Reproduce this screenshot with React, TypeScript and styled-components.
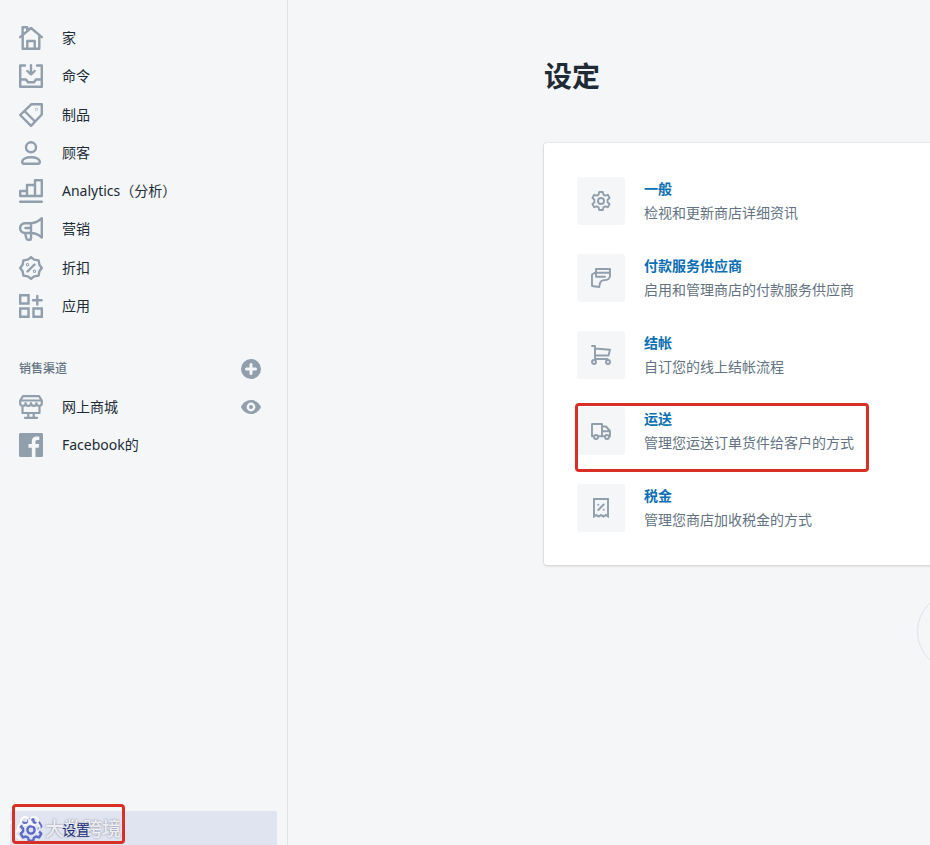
import React from "react";
import styled, { createGlobalStyle, css } from "styled-components";

const GlobalStyle = createGlobalStyle`
  *, *::before, *::after { box-sizing: border-box; }
  body {
    margin: 0;
    background: #f4f6f8;
    color: #212b36;
    font-family: "Noto Sans", "Noto Sans CJK SC", sans-serif;
    font-size: 14px;
    line-height: 24px;
    overflow: hidden;
  }
  ul { list-style: none; margin: 0; padding: 0; }
  svg { display: block; flex: none; }
`;

const Shell = styled.div`
  display: flex;
  height: 100vh;
  overflow: hidden;
`;

const Sidebar = styled.nav`
  display: flex;
  flex-direction: column;
  flex: none;
  width: 288px;
  padding: 19px 10px 0;
  border-right: 1px solid #dfe3e8;
`;

const NavList = styled.ul<{ $primary?: boolean }>`
  display: grid;
  grid-auto-rows: 1fr;
  ${(p) => p.$primary && css`min-height: 306px;`}
`;

const NavItem = styled.li`
  display: flex;
  align-items: center;
  min-height: 38px;
  padding-right: 16px;
`;

const NavLink = styled.a<{ $active?: boolean }>`
  display: flex;
  align-items: center;
  gap: 19px;
  flex: 1;
  height: 38px;
  padding-left: 9px;
  border-radius: 3px;
  color: ${(p) => (p.$active ? "#202e78" : "#212b36")};
  background: ${(p) => (p.$active ? "#e0e3f0" : "transparent")};
  font-weight: 400;
  font-size: 14px;
  text-decoration: none;
`;

const ActiveLabel = styled.span`
  position: relative;
  z-index: 1;
`;

const SectionHeader = styled.div`
  display: flex;
  align-items: center;
  justify-content: space-between;
  height: 38px;
  margin-top: 25px;
  padding: 0 16px 0 9px;
`;

const SectionTitle = styled.h2`
  margin: 0;
  color: #637381;
  font-size: 12px;
  font-weight: 500;
`;

const IconButton = styled.button`
  padding: 0;
  border: 0;
  background: none;
  cursor: pointer;
`;

const SettingsDock = styled.div`
  position: relative;
  display: flex;
  margin: auto 0 -4px;
`;

const Highlight = styled.span`
  position: absolute;
  z-index: 2;
  border: 3px solid #d93025;
  border-radius: 4px;
  pointer-events: none;
`;

const DockHighlight = styled(Highlight)`
  left: 2px;
  top: -7px;
  width: 113px;
  height: 40px;
`;

const Watermark = styled.span`
  position: absolute;
  left: -2px;
  top: 1px;
  display: flex;
  align-items: center;
  gap: 3px;
  color: rgba(255, 255, 255, 0.85);
  font-size: 19px;
  font-weight: 500;
  line-height: 32px;
  text-shadow: 0 0 2px #777c90;
  white-space: nowrap;
  pointer-events: none;
`;

const Main = styled.main`
  flex: 1;
  min-width: 0;
  overflow: hidden;
  padding: 56px 0 0 256px;
`;

const Page = styled.div`
  min-width: 998px;
`;

const Title = styled.h1`
  margin: 0 0 47px;
  font-size: 28px;
  line-height: 40px;
  font-weight: 700;
`;

const Card = styled.section`
  padding: 34px 33px 33px;
  border-radius: 3px;
  background: #fff;
  box-shadow: 0 0 0 1px rgba(63, 63, 68, 0.06), 0 1px 3px rgba(63, 63, 68, 0.17);
`;

const SettingList = styled.ul`
  display: flex;
  flex-direction: column;
  justify-content: space-between;
  min-height: 355px;
`;

const SettingItem = styled.li`
  position: relative;
  display: flex;
  gap: 19px;
`;

const IconTile = styled.span`
  display: grid;
  place-items: center;
  width: 48px;
  height: 48px;
  border-radius: 3px;
  background: #f4f6f8;
`;

const SettingTitle = styled.a`
  display: block;
  color: #0b6fb3;
  font-weight: 700;
  text-decoration: none;
`;

const SettingText = styled.p`
  margin: 0;
  color: #637381;
`;

const ItemHighlight = styled(Highlight)`
  left: -2px;
  top: -4px;
  width: 294px;
  height: 69px;
`;

const Footer = styled.footer`
  display: flex;
  justify-content: center;
  margin-top: 27px;
`;

const HelpPill = styled.div`
  width: 252px;
  height: 79px;
  border: 1px solid #dfe3e8;
  border-radius: 40px;
`;

type IconProps = {
  size?: number;
  color?: string;
  box?: number;
  weight?: number;
  children: React.ReactNode;
};

const Icon = ({ size = 24, color = "#919eab", box = 24, weight = 2.4, children }: IconProps) => (
  <svg width={size} height={size} viewBox={`0 0 ${box} ${box}`} fill="none" stroke={color}
    strokeWidth={weight} strokeLinejoin="round" strokeLinecap="round" aria-hidden="true">
    {children}
  </svg>
);

const GearShape = () => (
  <>
    <path d="M8.2 1h3.6l.6 2.600 1.800 1 2.600-.8 1.800 3.100-2 1.900v2.400l2 1.900-1.800 3.100-2.600-.8-1.800 1-.6 2.600H8.200l-.6-2.600-1.800-1-2.600.8-1.800-3.100 2-1.900V8.800l-2-1.900 1.800-3.100 2.600.8 1.800-1z" />
    <circle cx="10" cy="10" r="3" />
  </>
);

const primary = [
  { label: "家", icon: <path d="M1.200 11.200 12 2l10.800 9.200M3.700 9.500v13.300h16.600V9.500M8.300 22.800V15h7.400v7.800M3.600 8.500V1.200h4.600v3" /> },
  { label: "命令", icon: <path d="M6 1.500H1.200v21.300h21.600V1.500H18M12 1.200V10M8.300 7l3.700 3.500L15.700 7M1.200 15.500H7l2 2.800h6l2-2.800h5.800" /> },
  { label: "制品", icon: <><path d="M12.500 1.200h10.300v10.300L12 22.800 1.200 12zM5.500 8 16 18.500" /><circle cx="17.500" cy="6.500" r=".2" /></> },
  { label: "顾客", icon: <><circle cx="12" cy="6.300" r="5" /><path d="M5 22.800h14c1 0 1.800-.8 1.800-1.700 0-3-3.800-4.900-8.800-4.900s-8.800 1.900-8.800 4.900c0 .9.800 1.700 1.800 1.700z" /></> },
  { label: "Analytics（分析）", icon: <path d="M1.200 17v-5H8v5zM8 17V6h8v11zM16 17V1.200h6.800V17zM1.200 22.700h21.600" /> },
  { label: "营销", icon: <path d="M22.800 1.200V20.500c-3-2.800-6.300-4.500-10.800-4.500H6A4.900 4.900 0 0 1 6 6.200h6c4.500 0 7.800-2 10.800-5zM12 6.200V21.500c0 .8-.5 1.300-1.200 1.300H9.500c-1 0-1.800-.6-2.100-1.500L6 16M6.500 11H12" /> },
  {
    label: "折扣",
    icon: (
      <>
        <path d="M12 1.200l3.200 2.400 4.400.8.800 4.400L22.800 12l-2.400 3.200-.8 4.400-4.400.8L12 22.800l-3.200-2.400-4.400-.8-.8-4.400L1.200 12l2.400-3.200.8-4.400 4.400-.8zM8.500 15.500l7-7" />
        <circle cx="8.500" cy="8.800" r=".5" />
        <circle cx="15.500" cy="15.200" r=".5" />
      </>
    ),
  },
  { label: "应用", icon: <g strokeLinejoin="miter"><path d="M1.200 1.200h8.300v8.300H1.200zM1.200 14.500h8.300v8.300H1.200zM14.500 14.500h8.300v8.300h-8.300zM18.300 2v8.500M14 6.200h8.600" /></g> },
];

const settings = [
  { title: "一般", text: "检视和更新商店详细资讯", icon: <GearShape /> },
  { title: "付款服务供应商", text: "启用和管理商店的付款服务供应商", icon: <path d="M5 8.500V1h14v7.500c-1 2.600-2.500 3.600-5 3.600-3.500 0-4.500.8-5 3.200L8.200 19 1 18V6.500L5 4M5 4.800h14M5 8.700h9" /> },
  { title: "结帐", text: "自订您的线上结帐流程", icon: <><path d="M1 1h3v13h12.500M4 3.500l15 1.200-1.500 5.800H4" /><circle cx="3" cy="17" r="2" /><circle cx="17" cy="17" r="2" /></> },
  { title: "运送", text: "管理您运送订单货件给客户的方式", marked: true, icon: <><path d="M3 15.300H1V3h10v12.300H7M11 5.500h4L19 10v5.300h-1M14 15.300h-3M11 10.200h8" /><circle cx="5" cy="16" r="2" /><circle cx="16" cy="16" r="2" /></> },
  { title: "税金", text: "管理您商店加收税金的方式", icon: <><path strokeLinejoin="miter" d="M3 1h14v17.500l-2.300-1.500-2.400 1.500L10 17l-2.300 1.500L5.300 17 3 18.500z" /><path d="M7.300 12l5.400-5.500M7.300 6.700v0M12.700 11.800v0" /></> },
];

export default function App() {
  return (
    <>
      <GlobalStyle />
      <Shell>
        <Sidebar>
          <NavList $primary>
            {primary.map((item) => (
              <NavItem key={item.label}>
                <NavLink href="#"><Icon>{item.icon}</Icon>{item.label}</NavLink>
              </NavItem>
            ))}
          </NavList>
          <SectionHeader>
            <SectionTitle>销售渠道</SectionTitle>
            <IconButton aria-label="添加">
              <Icon size={20} box={20}>
                <circle cx="10" cy="10" r="10" fill="#919eab" stroke="none" />
                <path stroke="#f4f6f8" strokeWidth="3" d="M10 5.500v9M5.500 10h9" />
              </Icon>
            </IconButton>
          </SectionHeader>
          <NavList>
            <NavItem>
              <NavLink href="#">
                <Icon weight={2.2}><path d="M4 1.200h16l2.800 4.300v2.700a2.700 2.700 0 0 1-5.400 0 2.700 2.700 0 0 1-5.400 0 2.700 2.700 0 0 1-5.400 0 2.700 2.700 0 0 1-5.400 0V5.500zM1.200 5.500h21.600M3.500 11v7h17v-7M9.300 18v4.500M14.700 18v4.500M6 22.900h12" /></Icon>
                网上商城
              </NavLink>
              <IconButton aria-label="查看">
                <Icon size={20} box={20}>
                  <path stroke="none" fill="#919eab" d="M10 3c5.500 0 8.500 4 9.800 6.500.2.300.2.700 0 1C18.500 13 15.500 17 10 17S1.500 13 .2 10.500a1 1 0 0 1 0-1C1.500 7 4.500 3 10 3z" />
                  <circle cx="10" cy="10" r="3.200" stroke="#f4f6f8" />
                </Icon>
              </IconButton>
            </NavItem>
            <NavItem>
              <NavLink href="#">
                <Icon><path stroke="none" fill="#919eab" d="M1.500 0h21c.8 0 1.500.7 1.500 1.500v21c0 .8-.7 1.500-1.500 1.500H16.500v-9.300h3.200l.5-3.600h-3.700V8.800c0-1 .3-1.800 1.800-1.800h2V3.800c-.4 0-1.500-.2-2.800-.2-2.900 0-4.700 1.700-4.700 4.800v2.700H9.500v3.600h3.300V24H1.500C.7 24 0 23.300 0 22.500v-21C0 .7.7 0 1.500 0z" /></Icon>
                Facebook的
              </NavLink>
            </NavItem>
          </NavList>
          <SettingsDock>
            <NavLink href="#" $active>
              <Icon box={20} color="#5c6ac4" weight={2}><GearShape /></Icon>
              <ActiveLabel>设置</ActiveLabel>
            </NavLink>
            <Watermark>
              <Icon size={34} box={34} color="rgba(255,255,255,.85)" weight={2}>
                <path d="M2 11l3-2v16M10 18l-4 4 6 5" />
                <circle cx="17" cy="9" r="4" />
                <circle cx="26" cy="9" r="4" />
                <path d="M13 12c-4 2-4 5-1 7M30 12c3 3 2 6-1 8" />
              </Icon>
              大数跨境
            </Watermark>
            <DockHighlight />
          </SettingsDock>
        </Sidebar>
        <Main>
          <Page>
            <Title>设定</Title>
            <Card>
              <SettingList>
                {settings.map((item) => (
                  <SettingItem key={item.title}>
                    <IconTile><Icon size={20} box={20} weight={1.9}>{item.icon}</Icon></IconTile>
                    <div>
                      <SettingTitle href="#">{item.title}</SettingTitle>
                      <SettingText>{item.text}</SettingText>
                    </div>
                    {item.marked && <ItemHighlight />}
                  </SettingItem>
                ))}
              </SettingList>
            </Card>
            <Footer><HelpPill /></Footer>
          </Page>
        </Main>
      </Shell>
    </>
  );
}
